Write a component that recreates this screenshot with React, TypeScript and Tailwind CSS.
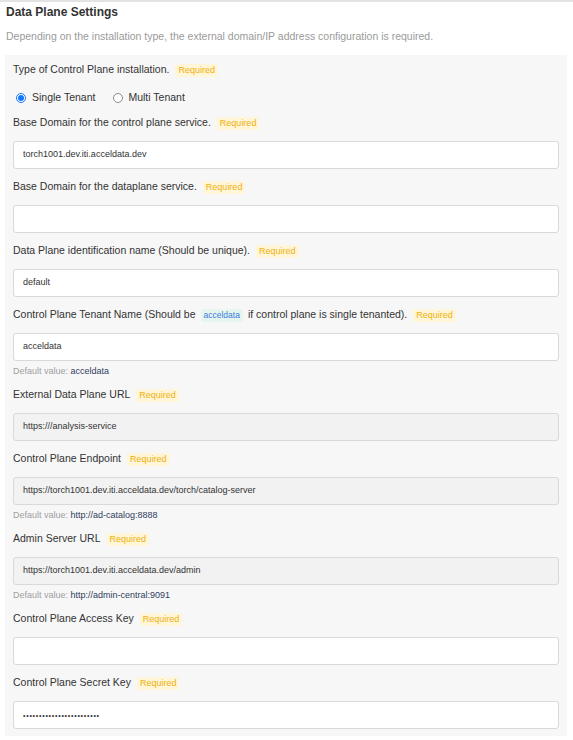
import React from "react";

const Req = () => (
  <span className="ml-[6px] inline-block rounded-[2px] bg-[#fff5d9] px-[3px] text-[9px] leading-[13px] text-[#f0b10c]">
    Required
  </span>
);

type FieldProps = {
  label: React.ReactNode;
  value?: string;
  disabled?: boolean;
  def?: string;
  password?: boolean;
};

const Field = ({ label, value = "", disabled, def, password }: FieldProps) => (
  <div className="flex flex-col">
    <div className="flex h-[18px] items-center whitespace-nowrap text-[10.5px] text-[#333]">{label}</div>
    <div
      className={`mt-[9px] flex h-[28px] items-center rounded-[3px] border border-[#d9d9d9] px-[9px] text-[9px] text-[#333] ${
        disabled ? "bg-[#f2f2f2]" : "bg-white"
      }`}
    >
      {password ? (
        <span className="text-[7px] leading-[7px] tracking-[0.75px] text-[#333]">{"•".repeat(24)}</span>
      ) : (
        value
      )}
    </div>
    {def && (
      <div className="mt-[5px] h-[11px] text-[9px] leading-[11px] text-[#a0a0a0]">
        Default value: <span className="text-[#2f3e5e]">{def}</span>
      </div>
    )}
  </div>
);

export default function App() {
  return (
    <div
      className="min-h-[740px] w-[573px] border-t-2 border-[#e3e3e3] bg-white"
      style={{ fontFamily: '"Liberation Sans", Arial, sans-serif' }}
    >
      <div className="px-[6px] pt-[1px]">
        <div className="text-[12px] font-bold leading-[18px] text-[#333]">Data Plane Settings</div>
        <div className="mt-[8px] text-[10.5px] leading-[14px] text-[#9a9a9a]">
          Depending on the installation type, the external domain/IP address configuration is required.
        </div>
      </div>
      <div className="mx-[5px] mt-[12px] flex w-[562px] flex-col gap-[9px] bg-[#f7f7f7] px-[8px] pb-[7px] pt-[6px]">
        <div className="flex flex-col">
          <div className="flex h-[18px] items-center text-[10.5px] text-[#333]">
            Type of Control Plane installation. <Req />
          </div>
          <div className="mt-[13px] flex h-[12px] items-center text-[10.5px] text-[#333]">
            <span className="ml-[3px] flex h-[10px] w-[10px] items-center justify-center rounded-full border border-[#1677ff] bg-white">
              <span className="h-[6px] w-[6px] rounded-full bg-[#1677ff]" />
            </span>
            <span className="ml-[6px]">Single Tenant</span>
            <span className="ml-[18px] h-[10px] w-[10px] rounded-full border border-[#8c8c8c] bg-white" />
            <span className="ml-[5px]">Multi Tenant</span>
          </div>
        </div>
        <div className="mt-[1px]">
          <Field label={<>Base Domain for the control plane service. <Req /></>} value="torch1001.dev.iti.acceldata.dev" />
        </div>
        <Field label={<>Base Domain for the dataplane service. <Req /></>} />
        <Field label={<>Data Plane identification name (Should be unique). <Req /></>} value="default" />
        <Field
          label={
            <>
              Control Plane Tenant Name (Should be
              <span className="mx-[5px] rounded-[2px] bg-[#e6f6ee] px-[3px] text-[8.5px] leading-[13px] text-[#3d7be0]">acceldata</span>
              if control plane is single tenanted). <Req />
            </>
          }
          value="acceldata"
          def="acceldata"
        />
        <Field label={<>External Data Plane URL <Req /></>} value="https:///analysis-service" disabled />
        <Field
          label={<>Control Plane Endpoint <Req /></>}
          value="https://torch1001.dev.iti.acceldata.dev/torch/catalog-server"
          disabled
          def="http://ad-catalog:8888"
        />
        <Field
          label={<>Admin Server URL <Req /></>}
          value="https://torch1001.dev.iti.acceldata.dev/admin"
          disabled
          def="http://admin-central:9091"
        />
        <Field label={<>Control Plane Access Key <Req /></>} />
        <Field label={<>Control Plane Secret Key <Req /></>} password />
      </div>
    </div>
  );
}
